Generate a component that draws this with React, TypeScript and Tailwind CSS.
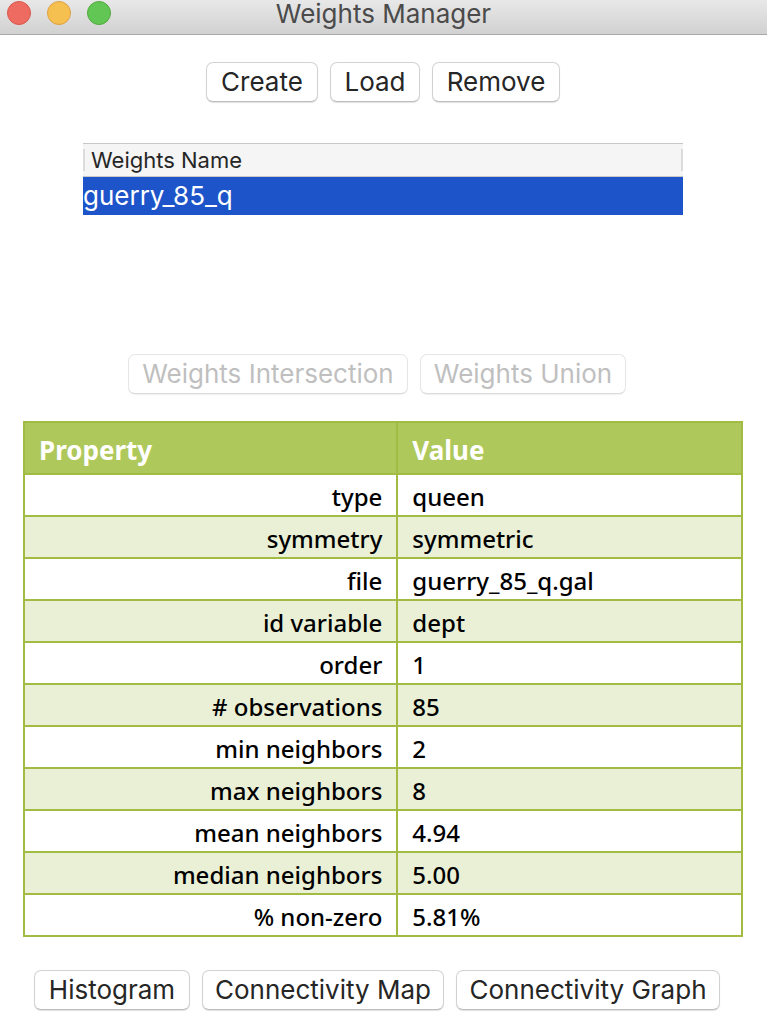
import type { ReactNode } from "react";

const properties: [string, string][] = [
  ["type", "queen"],
  ["symmetry", "symmetric"],
  ["file", "guerry_85_q.gal"],
  ["id variable", "dept"],
  ["order", "1"],
  ["# observations", "85"],
  ["min neighbors", "2"],
  ["max neighbors", "8"],
  ["mean neighbors", "4.94"],
  ["median neighbors", "5.00"],
  ["% non-zero", "5.81%"],
];

function PushButton({
  children,
  width,
  disabled = false,
}: {
  children: ReactNode;
  width: string;
  disabled?: boolean;
}) {
  return (
    <button
      type="button"
      disabled={disabled}
      className={`flex h-10 items-center justify-center whitespace-nowrap rounded-[7px] border border-[#d2d2d2] border-b-[#bdbdbd] bg-white text-[26px] leading-8 text-[#262626] shadow-[0_1px_1px_rgba(0,0,0,0.12)] disabled:border-[#e6e6e6] disabled:border-b-[#dcdcdc] disabled:text-[#bfbfbf] disabled:shadow-[0_1px_1px_rgba(0,0,0,0.06)] ${width}`}
    >
      {children}
    </button>
  );
}

export default function App() {
  return (
    <div className="min-h-screen bg-white font-['Inter','Liberation_Sans',sans-serif]">
      <header className="relative flex h-[35px] justify-center border-b border-[#a9a9a9] bg-linear-to-b from-[#e8e8e8] to-[#d1d1d1]">
        <div className="absolute top-px left-[7px] flex gap-4">
          <button type="button" aria-label="Close" className="size-6 rounded-full border border-[#d9574e] bg-[#ed6b60]" />
          <button type="button" aria-label="Minimize" className="size-6 rounded-full border border-[#dda044] bg-[#f6c050]" />
          <button type="button" aria-label="Zoom" className="size-6 rounded-full border border-[#53a83f] bg-[#62c655]" />
        </div>
        <h1 className="text-[26px] leading-7 text-[#4b4b4b]">Weights Manager</h1>
      </header>

      <main className="flex flex-col pr-6 pb-6 pl-[23px]">
        <div className="mt-[27px] flex justify-center gap-3">
          <PushButton width="w-28">Create</PushButton>
          <PushButton width="w-[90px]">Load</PushButton>
          <PushButton width="w-32">Remove</PushButton>
        </div>

        <div className="mx-[60px] mt-[41px] h-[211px]">
          <table className="w-full border-separate border-spacing-0 text-left">
            <thead>
              <tr>
                <th className="h-[34px] border-y border-[#c8c8c8] bg-[#f5f5f5] p-0 font-normal">
                  <div className="border-x-2 border-[#dcdcdc] pl-[6px] text-[22px] leading-[22px] text-[#262626]">
                    Weights Name
                  </div>
                </th>
              </tr>
            </thead>
            <tbody>
              <tr>
                <td className="h-[38px] bg-[#1d54c9] p-0 text-[26px] leading-9 text-white">guerry_85_q</td>
              </tr>
            </tbody>
          </table>
        </div>

        <div className="mr-3 flex justify-center gap-3">
          <PushButton width="w-[280px]" disabled>
            Weights Intersection
          </PushButton>
          <PushButton width="w-[206px]" disabled>
            Weights Union
          </PushButton>
        </div>

        <table className="mt-[27px] w-full table-fixed border-collapse border-2 border-[#a2bc43] font-['Noto_Sans','Open_Sans',sans-serif] text-[24px] font-medium text-black">
          <thead>
            <tr className="h-[52px] bg-[#afc85b] text-left text-[26px] leading-8 text-white">
              <th className="w-[52%] border-2 border-[#a2bc43] px-[14px] pt-1 pb-0 font-bold">Property</th>
              <th className="border-2 border-[#a2bc43] px-[14px] pt-1 pb-0 font-bold">Value</th>
            </tr>
          </thead>
          <tbody>
            {properties.map(([name, value]) => (
              <tr key={name} className="h-[42px] leading-8 even:bg-[#eaf0d6]">
                <td className="border-2 border-[#a2bc43] px-[14px] pt-[3px] pb-0 text-right">{name}</td>
                <td className="border-2 border-[#a2bc43] px-[14px] pt-[3px] pb-0">{value}</td>
              </tr>
            ))}
          </tbody>
        </table>

        <div className="mt-[33px] mr-3 flex justify-center gap-3">
          <PushButton width="w-[156px]">Histogram</PushButton>
          <PushButton width="w-[242px]">Connectivity Map</PushButton>
          <PushButton width="w-[264px]">Connectivity Graph</PushButton>
        </div>
      </main>
    </div>
  );
}
